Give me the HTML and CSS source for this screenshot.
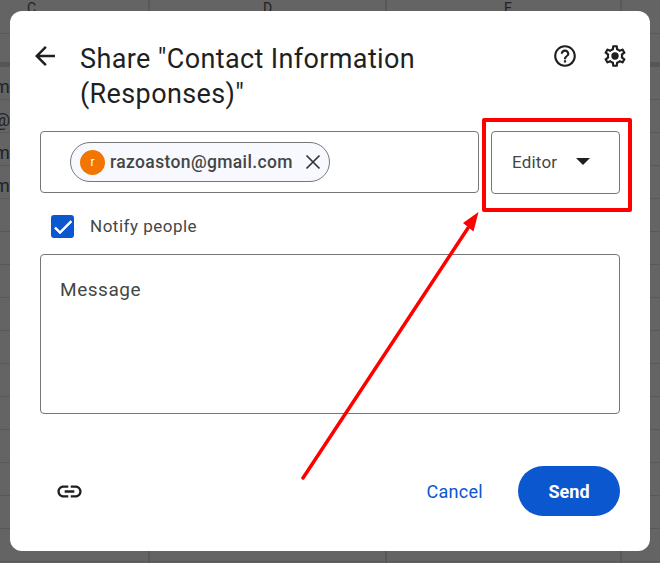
FILE: index.html
```html
<!DOCTYPE html>
<html lang="en">
<head>
<meta charset="utf-8">
<title>Share dialog</title>
<link rel="stylesheet" href="styles.css">
</head>
<body>
<div class="sheet">
  <div class="sheet-head">
    <div class="col col-c">C</div>
    <div class="col col-d">D</div>
    <div class="col col-e">E</div>
  </div>
  <div class="sheet-labels">
    <div>ma</div>
    <div>@g</div>
    <div>m</div>
    <div>ma</div>
  </div>
</div>

<main class="dialog">
  <header class="dialog-head">
    <svg class="icon icon-back" viewBox="0 0 24 24"><path d="M20 11H7.83l5.59-5.59L12 4l-8 8 8 8 1.41-1.41L7.83 13H20v-2z"/></svg>
    <h1 class="title">Share "Contact Information (Responses)"</h1>
    <div class="head-actions">
      <svg class="icon icon-action" viewBox="0 0 24 24"><path d="M11 18h2v-2h-2v2zm1-16C6.48 2 2 6.48 2 12s4.48 10 10 10 10-4.48 10-10S17.52 2 12 2zm0 18c-4.41 0-8-3.59-8-8s3.59-8 8-8 8 3.59 8 8-3.59 8-8 8zm0-14c-2.21 0-4 1.79-4 4h2c0-1.1.9-2 2-2s2 .9 2 2c0 2-3 1.75-3 5h2c0-2.25 3-2.5 3-5 0-2.21-1.79-4-4-4z"/></svg>
      <svg class="icon icon-action" viewBox="0 0 24 24"><path d="M19.43 12.98c.04-.32.07-.64.07-.98 0-.34-.03-.66-.07-.98l2.11-1.65c.19-.15.24-.42.12-.64l-2-3.46c-.09-.16-.26-.25-.44-.25-.06 0-.12.01-.17.03l-2.49 1c-.52-.4-1.08-.73-1.69-.98l-.38-2.65C14.46 2.18 14.25 2 14 2h-4c-.25 0-.46.18-.49.42l-.38 2.65c-.61.25-1.17.59-1.69.98l-2.49-1c-.06-.02-.12-.03-.18-.03-.17 0-.34.09-.43.25l-2 3.46c-.13.22-.07.49.12.64l2.11 1.65c-.04.32-.07.65-.07.98 0 .33.03.66.07.98l-2.11 1.65c-.19.15-.24.42-.12.64l2 3.46c.09.16.26.25.44.25.06 0 .12-.01.17-.03l2.49-1c.52.4 1.08.73 1.69.98l.38 2.65c.03.24.24.42.49.42h4c.25 0 .46-.18.49-.42l.38-2.65c.61-.25 1.17-.59 1.69-.98l2.49 1c.06.02.12.03.18.03.17 0 .34-.09.43-.25l2-3.46c.12-.22.07-.49-.12-.64l-2.11-1.65zm-1.98-1.71c.04.31.05.52.05.73 0 .21-.02.43-.05.73l-.14 1.13.89.7 1.08.84-.7 1.21-1.27-.51-1.04-.42-.9.68c-.43.32-.84.56-1.25.73l-1.06.43-.16 1.13-.2 1.35h-1.4l-.19-1.35-.16-1.13-1.06-.43c-.43-.18-.83-.41-1.23-.71l-.91-.7-1.06.43-1.27.51-.7-1.21 1.08-.84.89-.7-.14-1.13c-.03-.31-.05-.54-.05-.74s.02-.43.05-.73l.14-1.13-.89-.7-1.08-.84.7-1.21 1.27.51 1.04.42.9-.68c.43-.32.84-.56 1.25-.73l1.06-.43.16-1.13.2-1.35h1.39l.19 1.35.16 1.13 1.06.43c.43.18.83.41 1.23.71l.91.7 1.06-.43 1.27-.51.7 1.21-1.07.85-.89.7.14 1.13z"/><circle cx="12" cy="12" r="3.4"/></svg>
    </div>
  </header>

  <section class="recipient-row">
    <div class="recipient-box">
      <div class="chip">
        <span class="avatar">r</span>
        <span class="chip-text">razoaston@gmail.com</span>
        <svg class="icon icon-close" viewBox="0 0 24 24"><path d="M5.500 5.500l13 13M18.500 5.500l-13 13"/></svg>
      </div>
    </div>
    <div class="role-box">
      <span>Editor</span>
      <span class="caret"></span>
    </div>
  </section>

  <label class="notify">
    <span class="checkbox">
      <svg class="icon icon-check" viewBox="0 0 24 24"><path d="M9 16.170L4.830 12l-1.420 1.410L9 19 21 7l-1.410-1.410z"/></svg>
    </span>
    <span class="notify-text">Notify people</span>
  </label>

  <div class="message">Message</div>

  <footer class="dialog-foot">
    <svg class="icon icon-link" viewBox="0 0 24 24"><path d="M3.9 12c0-1.71 1.39-3.1 3.1-3.1h4V7H7c-2.76 0-5 2.24-5 5s2.24 5 5 5h4v-1.9H7c-1.71 0-3.1-1.39-3.1-3.1zM8 13h8v-2H8v2zm9-6h-4v1.9h4c1.71 0 3.1 1.39 3.1 3.1s-1.39 3.1-3.1 3.1h-4V17h4c2.76 0 5-2.24 5-5s-2.24-5-5-5z"/></svg>
    <div class="foot-actions">
      <span class="cancel">Cancel</span>
      <span class="send">Send</span>
    </div>
  </footer>
</main>

<svg class="annotation" viewBox="0 0 660 563">
  <rect class="anno-box" x="484" y="120" width="146" height="90"/>
  <line class="anno-line" x1="303" y1="478" x2="468" y2="228"/>
  <polygon class="anno-head" points="478.500,212 463,223 473.500,231.500"/>
</svg>
</body>
</html>
```

FILE: styles.css
```css
* { box-sizing: border-box; }

html, body {
  margin: 0;
  height: 563px;
  overflow: hidden;
}

body {
  position: relative;
  padding: 11px 10px 12px;
  font-family: Roboto, "Liberation Sans", sans-serif;
  color: #444746;
  background-color: #646464;
}

/* Dimmed spreadsheet behind the dialog */
.sheet {
  position: absolute;
  inset: 0;
  color: #222;
  background-color: #646464;
  background-image:
    linear-gradient(#565656, #565656),
    repeating-linear-gradient(to bottom, #646464 0 32px, #585858 32px 33px);
  background-size: 100% 5px, 100% 100%;
  background-position: 0 62px, 0 1px;
  background-repeat: no-repeat;
}

.sheet::before {
  content: "";
  position: absolute;
  inset: 0;
  background-image:
    linear-gradient(#585858, #585858),
    linear-gradient(#585858, #585858),
    linear-gradient(#585858, #585858);
  background-size: 2px 100%, 2px 100%, 2px 100%;
  background-position: 148px 0, 385px 0, 620px 0;
  background-repeat: no-repeat;
}

.sheet-head {
  position: relative;
  display: flex;
  font-size: 14px;
  line-height: 14px;
}

.col { padding-top: 1px; }
.col-c { width: 263px; padding-left: 27px; }
.col-d { width: 241px; }
.col-e { width: 40px; }

.sheet-labels {
  position: absolute;
  top: 70px;
  left: -6px;
  font-size: 18px;
  line-height: 33px;
}

/* Dialog */
.dialog {
  position: relative;
  display: flex;
  flex-direction: column;
  height: 540px;
  padding: 30px 30px 35px;
  background: #fff;
  border-radius: 12px;
}

.icon {
  display: block;
  flex: none;
  fill: currentColor;
}

.dialog-head {
  display: flex;
  align-items: flex-start;
  height: 90px;
  color: #1f1f1f;
}

.icon-back {
  width: 30px;
  height: 30px;
  margin: 0 20px 0 -10px;
}

.title {
  flex: 1;
  margin: 1px 0 0;
  max-width: 350px;
  font-size: 27px;
  font-weight: 400;
  letter-spacing: 0.37px;
  line-height: 35px;
}

.head-actions {
  display: flex;
  gap: 24px;
  margin: 2px -8px 0 auto;
}

.icon-action {
  width: 26px;
  height: 26px;
}

.recipient-row {
  display: flex;
  gap: 12px;
}

.recipient-box,
.role-box,
.message {
  border: 1px solid #747775;
  border-radius: 4px;
}

.recipient-box {
  display: flex;
  align-items: center;
  width: 439px;
  height: 62px;
  padding-left: 29px;
}

.chip {
  display: flex;
  align-items: center;
  width: 260px;
  height: 40px;
  padding: 0 4px 0 9px;
  background: #f8f9ff;
  border: 1px solid #747775;
  border-radius: 20px;
}

.avatar {
  display: flex;
  align-items: center;
  justify-content: center;
  width: 25px;
  height: 25px;
  color: #fff;
  font-size: 12px;
  background: #f27500;
  border-radius: 50%;
}

.chip-text {
  margin-left: 5px;
  font-size: 17.5px;
  font-weight: 500;
  letter-spacing: 0.36px;
}

.icon-close {
  width: 24px;
  height: 24px;
  margin-left: auto;
  fill: none;
  stroke: #333;
  stroke-width: 1.7;
}

.role-box {
  display: flex;
  align-items: center;
  width: 129px;
  height: 63px;
  padding: 0 0 2px 20px;
  font-size: 17px;
  letter-spacing: 0.2px;
}

.caret {
  width: 0;
  height: 0;
  margin-left: 19px;
  border-style: solid;
  border-width: 7px 7px 0;
  border-color: #1f1f1f transparent transparent;
}

.notify {
  display: flex;
  align-items: center;
  gap: 16px;
  height: 23px;
  margin: 21px 0 16px 11px;
  font-size: 17px;
  letter-spacing: 0.5px;
}

.notify-text {
  padding-bottom: 2px;
}

.checkbox {
  display: flex;
  align-items: center;
  justify-content: center;
  width: 23px;
  height: 23px;
  background: #0b57d0;
  border-radius: 3px;
}

.icon-check {
  width: 24px;
  height: 24px;
  fill: #fff;
  stroke: #fff;
  stroke-width: 0.6;
}

.message {
  height: 160px;
  padding: 23px 19px;
  font-size: 19px;
  letter-spacing: 0.55px;
  line-height: 24px;
}

.dialog-foot {
  display: flex;
  align-items: center;
  justify-content: space-between;
  margin-top: auto;
}

.icon-link {
  width: 29px;
  height: 29px;
  margin-left: 15px;
  color: #1f1f1f;
}

.foot-actions {
  display: flex;
  align-items: center;
  gap: 35px;
}

.cancel {
  color: #0b57d0;
  font-size: 18px;
  letter-spacing: 0.3px;
}

.send {
  display: flex;
  align-items: center;
  justify-content: center;
  width: 102px;
  height: 50px;
  color: #fff;
  font-size: 18px;
  font-weight: 700;
  background: #0b57d0;
  border-radius: 25px;
}

/* Red annotation drawn on top of the screenshot */
.annotation {
  position: absolute;
  inset: 0;
  width: 660px;
  height: 563px;
}

.anno-box {
  fill: none;
  stroke: #fe0000;
  stroke-width: 4;
  stroke-linejoin: round;
}

.anno-line {
  stroke: #fe0000;
  stroke-width: 3.5;
  stroke-linecap: round;
}

.anno-head {
  fill: #fe0000;
}
```
